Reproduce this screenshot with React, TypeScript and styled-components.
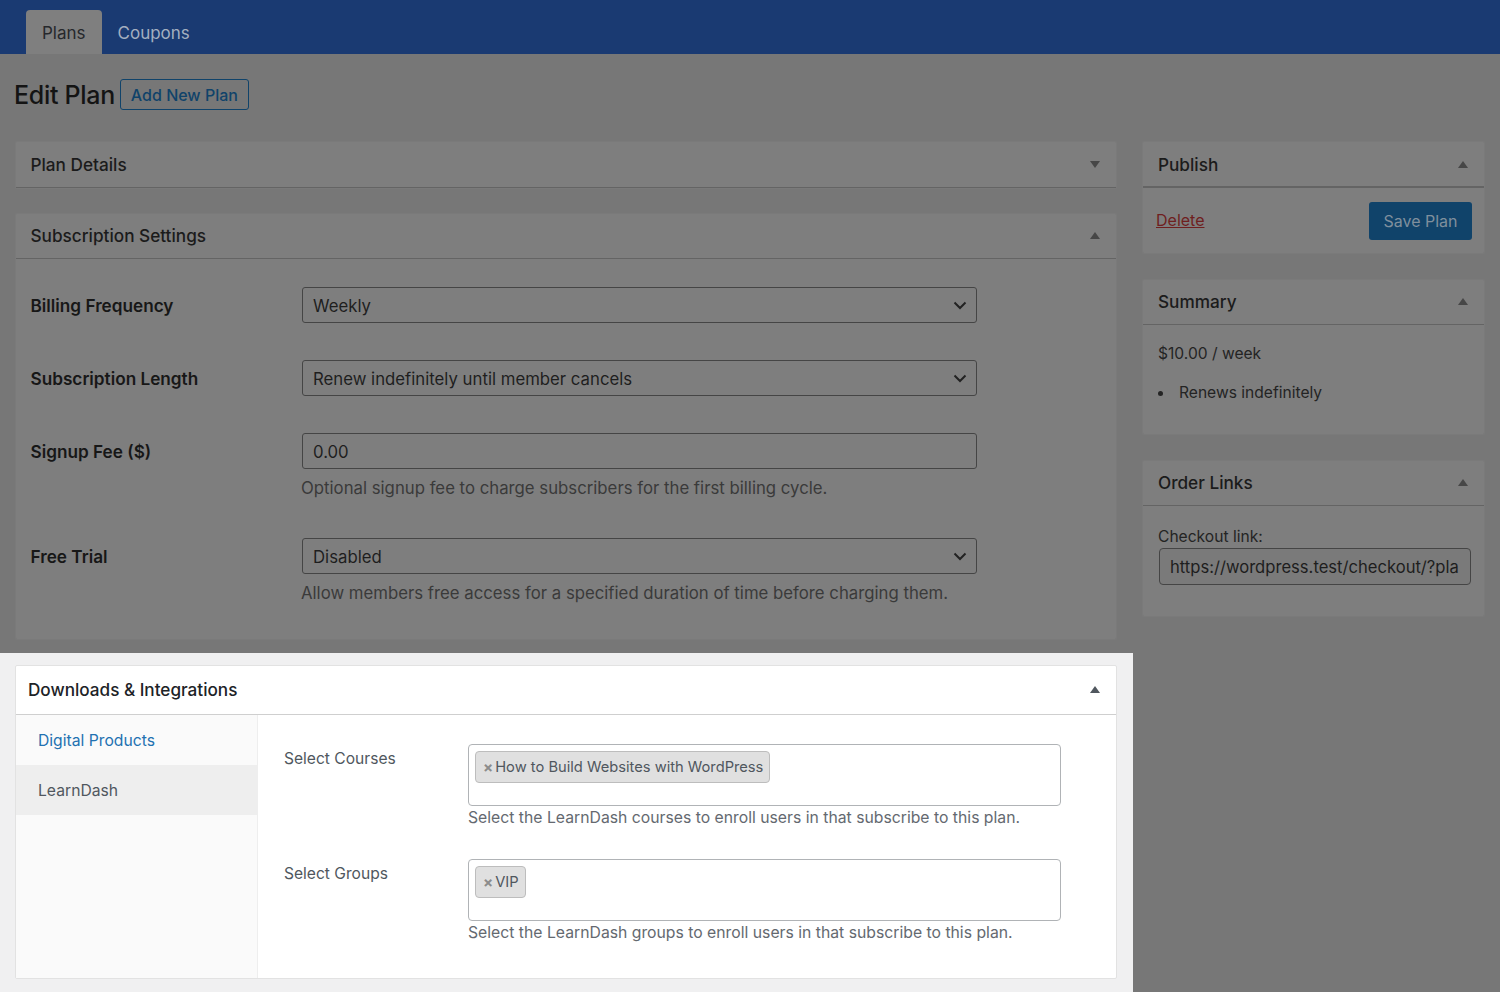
import React from 'react';
import styled, { createGlobalStyle } from 'styled-components';

const GlobalStyle = createGlobalStyle`
  html, body {
    margin: 0;
    padding: 0;
    background: #777777;
    font-family: Inter, "Liberation Sans", sans-serif;
    color: #1b1b1b;
  }
  * { box-sizing: border-box; }
`;

const Page = styled.div`
  width: 1500px;
  height: 992px;
  overflow: hidden;
`;

const TopBar = styled.div`
  height: 54px;
  background: #1a3a72;
  padding: 10px 0 0 26px;
  display: flex;
`;

const Tab = styled.div<{ $active?: boolean }>`
  height: 44px;
  padding: 2px 16px 0;
  display: flex;
  align-items: center;
  font-size: 17px;
  border-radius: 4px 4px 0 0;
  background: ${(p) => (p.$active ? '#7f7f7f' : 'transparent')};
  color: ${(p) => (p.$active ? '#26282c' : '#a4afc0')};
`;

const TitleRow = styled.div`
  height: 87px;
  padding: 25px 0 0 14px;
  display: flex;
  align-items: flex-start;
  gap: 5px;
`;

const Title = styled.h1`
  margin: 1px 0 0;
  font-size: 25px;
  font-weight: 500;
  line-height: 31px;
  letter-spacing: -0.3px;
  color: #141414;
`;

const OutlineButton = styled.div`
  height: 31px;
  width: 129px;
  display: flex;
  align-items: center;
  justify-content: center;
  border: 1px solid #10436a;
  border-radius: 3px;
  font-size: 16px;
  font-weight: 500;
  color: #10436a;
`;

const Columns = styled.div`
  display: flex;
  gap: 25px;
  padding: 0 15px;
  align-items: flex-start;
`;

const MainColumn = styled.div`
  width: 1102px;
  flex: none;
  display: flex;
  flex-direction: column;
`;

const SideColumn = styled.div`
  width: 343px;
  flex: none;
  display: flex;
  flex-direction: column;
  gap: 26px;
`;

const Box = styled.section`
  background: #7e7e7e;
  border: 1px solid #7a7a7a;
  border-bottom: 0;
  border-radius: 2px;
  box-shadow: 0 1px 0 #7a7a7a;
`;

const SpacedBox = styled(Box)`
  margin-bottom: 25px;
`;

const BoxHeader = styled.div<{ $thick?: boolean }>`
  height: ${(p) => (p.$thick ? 46 : 45)}px;
  padding: 0 16px ${(p) => (p.$thick ? 0 : 1)}px 15px;
  display: flex;
  align-items: center;
  justify-content: space-between;
  border-bottom: ${(p) => (p.$thick ? 2 : 1)}px solid #646464;
  font-size: 17.2px;
  font-weight: 500;
  color: #1b1b1b;
`;

const MainBoxHeader = styled(BoxHeader)`
  padding-left: 14.5px;
`;

const CollapsedHeader = styled(MainBoxHeader)`
  height: 46px;
  padding-bottom: 0;
`;

const Triangle = ({ down, color = '#474747' }: { down?: boolean; color?: string }) => (
  <svg width="10" height="7" viewBox="0 0 10 7" style={{ transform: down ? 'rotate(180deg)' : undefined }}>
    <path d="M5 0 L10 7 L0 7 Z" fill={color} />
  </svg>
);

const SettingsBody = styled.div`
  padding: 28px 15px 0 14.5px;
  height: 380px;
  display: flex;
  flex-direction: column;
`;

const FormRow = styled.div<{ $gap: number }>`
  display: flex;
  margin-bottom: ${(p) => p.$gap}px;
`;

const RowLabel = styled.div`
  width: 271.5px;
  flex: none;
  height: 36px;
  display: flex;
  align-items: center;
  font-size: 17.2px;
  font-weight: 600;
  color: #171717;
`;

const Field = styled.div`
  width: 675px;
`;

const Control = styled.div`
  height: 36px;
  padding: 1px 9px 0 10px;
  display: flex;
  align-items: center;
  justify-content: space-between;
  border: 1px solid #454545;
  border-radius: 3px;
  font-size: 16.75px;
  color: #1e1e1e;
`;

const Help = styled.div`
  margin: 9px 0 0 -1px;
  font-size: 16.75px;
  line-height: 20px;
  color: #3a3a3a;
`;

const Chevron = () => (
  <svg width="14" height="9" viewBox="0 0 14 9" fill="none">
    <path d="M1.5 1.5 L7 7 L12.5 1.5" stroke="#222" strokeWidth="2" />
  </svg>
);

const PublishBody = styled.div`
  height: 65px;
  padding: 14px 12px 0 13px;
  display: flex;
  justify-content: space-between;
  align-items: flex-start;
`;

const DeleteLink = styled.a`
  margin-top: 8px;
  font-size: 16px;
  line-height: 20px;
  color: #6f1f1f;
  text-decoration: underline;
`;

const SaveButton = styled.div`
  width: 103px;
  height: 38px;
  display: flex;
  align-items: center;
  justify-content: center;
  background: #10436a;
  border-radius: 3px;
  font-size: 16px;
  color: #7f8f9d;
`;

const SummaryBody = styled.div`
  height: 109px;
  padding: 19px 15px 0;
  font-size: 15.6px;
  color: #242424;
`;

const SummaryLine = styled.div`
  line-height: 20px;
`;

const Bullets = styled.ul`
  margin: 19px 0 0;
  padding: 0;
  list-style: none;
  line-height: 20px;

  li {
    display: flex;
    align-items: center;
  }

  li::before {
    content: '';
    width: 5px;
    height: 5px;
    margin: 1px 16px 0 0;
    border-radius: 50%;
    background: #242424;
  }
`;

const LinksBody = styled.div`
  height: 110px;
  padding: 21px 14px 0 15px;
  font-size: 15.6px;
  color: #242424;
`;

const LinkLabel = styled.div`
  line-height: 20px;
  margin-bottom: 1px;
`;

const LinkInput = styled.div`
  width: 312px;
  height: 37px;
  margin-left: 1px;
  padding: 0 10px;
  display: flex;
  align-items: center;
  overflow: hidden;
  white-space: nowrap;
  background: #7a7a7a;
  border: 1px solid #454545;
  border-radius: 4px;
  font-size: 16.6px;
  color: #1e1e1e;
`;

const Spotlight = styled.div`
  margin: 14px -16px 0 -15px;
  padding: 12px 16px 13px 15px;
  background: #f0f0f1;
`;

const LightBox = styled.section`
  height: 314px;
  background: #ffffff;
  border: 1px solid #e2e2e2;
  border-radius: 2px;
  display: flex;
  flex-direction: column;
`;

const LightHeader = styled.div`
  height: 49px;
  flex: none;
  padding: 0 16px 2px 12px;
  display: flex;
  align-items: center;
  justify-content: space-between;
  border-bottom: 1px solid #cfcfcf;
  font-size: 17.15px;
  font-weight: 500;
  color: #1d2327;
`;

const LightBody = styled.div`
  flex: 1;
  display: flex;
`;

const SideNav = styled.div`
  width: 242px;
  flex: none;
  background: #fafafa;
  border-right: 1px solid #eeeeee;
`;

const NavItem = styled.div<{ $active?: boolean }>`
  height: 50px;
  padding-left: 22px;
  display: flex;
  align-items: center;
  font-size: 15.7px;
  background: ${(p) => (p.$active ? 'transparent' : '#eeeeee')};
  color: ${(p) => (p.$active ? '#2271b1' : '#50575e')};
`;

const TabContent = styled.div`
  flex: 1;
  padding: 29px 0 0 26px;
`;

const PickerRow = styled.div`
  display: flex;
  height: 115px;
`;

const PickerLabel = styled.div`
  width: 184px;
  flex: none;
  padding-top: 4px;
  font-size: 15.6px;
  line-height: 22px;
  color: #50575e;
`;

const PickerField = styled.div`
  width: 593px;
`;

const TagBox = styled.div`
  height: 62px;
  padding: 6px;
  display: flex;
  align-items: flex-start;
  border: 1px solid #b0b3b6;
  border-radius: 4px;
  background: #fff;
`;

const Tag = styled.div`
  height: 32px;
  padding: 0 6px 0 7px;
  display: flex;
  align-items: center;
  gap: 2px;
  background: #e0e0e0;
  border: 1px solid #bdbdbd;
  border-radius: 4px;
  font-size: 14.7px;
  color: #50575e;
`;

const TagRemove = styled.span`
  font-size: 15px;
  font-weight: 700;
  color: #8c8c8c;
`;

const PickerHelp = styled.div`
  margin-top: 1px;
  font-size: 15.75px;
  line-height: 22px;
  color: #646970;
`;

const App = () => (
  <Page>
    <GlobalStyle />
    <TopBar>
      <Tab $active>Plans</Tab>
      <Tab>Coupons</Tab>
    </TopBar>
    <TitleRow>
      <Title>Edit Plan</Title>
      <OutlineButton>Add New Plan</OutlineButton>
    </TitleRow>
    <Columns>
      <MainColumn>
        <SpacedBox>
          <CollapsedHeader>
            Plan Details
            <Triangle down />
          </CollapsedHeader>
        </SpacedBox>
        <Box>
          <MainBoxHeader>
            Subscription Settings
            <Triangle />
          </MainBoxHeader>
          <SettingsBody>
            <FormRow $gap={37}>
              <RowLabel>Billing Frequency</RowLabel>
              <Field>
                <Control>
                  Weekly
                  <Chevron />
                </Control>
              </Field>
            </FormRow>
            <FormRow $gap={37}>
              <RowLabel>Subscription Length</RowLabel>
              <Field>
                <Control>
                  Renew indefinitely until member cancels
                  <Chevron />
                </Control>
              </Field>
            </FormRow>
            <FormRow $gap={40}>
              <RowLabel>Signup Fee ($)</RowLabel>
              <Field>
                <Control>0.00</Control>
                <Help>Optional signup fee to charge subscribers for the first billing cycle.</Help>
              </Field>
            </FormRow>
            <FormRow $gap={0}>
              <RowLabel>Free Trial</RowLabel>
              <Field>
                <Control>
                  Disabled
                  <Chevron />
                </Control>
                <Help>Allow members free access for a specified duration of time before charging them.</Help>
              </Field>
            </FormRow>
          </SettingsBody>
        </Box>
        <Spotlight>
          <LightBox>
            <LightHeader>
              Downloads &amp; Integrations
              <Triangle color="#50575e" />
            </LightHeader>
            <LightBody>
              <SideNav>
                <NavItem $active>Digital Products</NavItem>
                <NavItem>LearnDash</NavItem>
              </SideNav>
              <TabContent>
                <PickerRow>
                  <PickerLabel>Select Courses</PickerLabel>
                  <PickerField>
                    <TagBox>
                      <Tag>
                        <TagRemove>×</TagRemove>
                        How to Build Websites with WordPress
                      </Tag>
                    </TagBox>
                    <PickerHelp>Select the LearnDash courses to enroll users in that subscribe to this plan.</PickerHelp>
                  </PickerField>
                </PickerRow>
                <PickerRow>
                  <PickerLabel>Select Groups</PickerLabel>
                  <PickerField>
                    <TagBox>
                      <Tag>
                        <TagRemove>×</TagRemove>
                        VIP
                      </Tag>
                    </TagBox>
                    <PickerHelp>Select the LearnDash groups to enroll users in that subscribe to this plan.</PickerHelp>
                  </PickerField>
                </PickerRow>
              </TabContent>
            </LightBody>
          </LightBox>
        </Spotlight>
      </MainColumn>
      <SideColumn>
        <Box>
          <BoxHeader $thick>
            Publish
            <Triangle />
          </BoxHeader>
          <PublishBody>
            <DeleteLink>Delete</DeleteLink>
            <SaveButton>Save Plan</SaveButton>
          </PublishBody>
        </Box>
        <Box>
          <BoxHeader>
            Summary
            <Triangle />
          </BoxHeader>
          <SummaryBody>
            <SummaryLine>$10.00 / week</SummaryLine>
            <Bullets>
              <li>Renews indefinitely</li>
            </Bullets>
          </SummaryBody>
        </Box>
        <Box>
          <BoxHeader>
            Order Links
            <Triangle />
          </BoxHeader>
          <LinksBody>
            <LinkLabel>Checkout link:</LinkLabel>
            <LinkInput>https://wordpress.test/checkout/?pla</LinkInput>
          </LinksBody>
        </Box>
      </SideColumn>
    </Columns>
  </Page>
);

export default App;
